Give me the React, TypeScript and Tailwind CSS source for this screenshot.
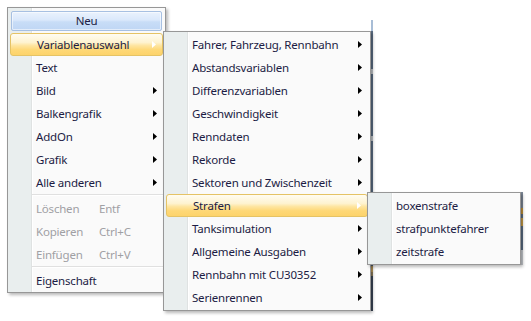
import React from "react";

const gutterBg =
  "bg-[linear-gradient(to_right,#e9eeee_0px,#e9eeee_23px,#dfe2e2_23px,#dfe2e2_24px,#ffffff_24px,#ffffff_25px,#fafafa_25px)]";

function Arrow({ white }: { white?: boolean }) {
  return (
    <svg width="4" height="7" viewBox="0 0 4 7" className="shrink-0">
      <polygon points="0,0 4,3.5 0,7" fill={white ? "#ffffff" : "#000000"} />
    </svg>
  );
}

type Item = {
  label: string;
  sub?: boolean;
  hot?: boolean;
  disabled?: boolean;
  shortcut?: string;
  sep?: boolean;
};

function Row({ item }: { item: Item }) {
  if (item.sep) {
    return (
      <div className="h-[3px] ml-[22px] flex flex-col">
        <div className="h-[1px] bg-[#e0e0e0]" />
        <div className="h-[1px] bg-white" />
      </div>
    );
  }
  const hot = item.hot;
  return (
    <div
      className={
        "h-[23px] flex items-center pl-[26px] pr-[6px] rounded-[3px] " +
        (hot
          ? "border border-[#e5c365] pl-[25px] pr-[5px] bg-[linear-gradient(to_bottom,#fffcf2_0%,#fef3d0_40%,#fee5a0_55%,#fed877_75%,#fdd36b_100%)]"
          : "")
      }
    >
      {item.shortcut !== undefined ? (
        <>
          <span className="w-[63px] text-[#a0a0a4]">{item.label}</span>
          <span className="text-[#a0a0a4]">{item.shortcut}</span>
        </>
      ) : (
        <span className={"flex-1 " + (item.disabled ? "text-[#a0a0a4]" : "")}>{item.label}</span>
      )}
      {item.sub ? <Arrow white={hot} /> : null}
    </div>
  );
}

export default function App() {
  const menu1: Item[] = [
    { label: "Variablenauswahl", sub: true, hot: true },
    { label: "Text" },
    { label: "Bild", sub: true },
    { label: "Balkengrafik", sub: true },
    { label: "AddOn", sub: true },
    { label: "Grafik", sub: true },
    { label: "Alle anderen", sub: true },
    { label: "", sep: true },
    { label: "Löschen", shortcut: "Entf", disabled: true },
    { label: "Kopieren", shortcut: "Ctrl+C", disabled: true },
    { label: "Einfügen", shortcut: "Ctrl+V", disabled: true },
    { label: "", sep: true },
    { label: "Eigenschaft" },
  ];
  const menu2: Item[] = [
    { label: "Fahrer, Fahrzeug, Rennbahn", sub: true },
    { label: "Abstandsvariablen", sub: true },
    { label: "Differenzvariablen", sub: true },
    { label: "Geschwindigkeit", sub: true },
    { label: "Renndaten", sub: true },
    { label: "Rekorde", sub: true },
    { label: "Sektoren und Zwischenzeit", sub: true },
    { label: "Strafen", sub: true, hot: true },
    { label: "Tanksimulation", sub: true },
    { label: "Allgemeine Ausgaben", sub: true },
    { label: "Rennbahn mit CU30352", sub: true },
    { label: "Serienrennen", sub: true },
  ];
  const menu3: Item[] = [
    { label: "boxenstrafe" },
    { label: "strafpunktefahrer" },
    { label: "zeitstrafe" },
  ];

  return (
    <div className="relative w-[531px] h-[321px] bg-white overflow-hidden font-['Noto_Sans',sans-serif] text-[11.5px] tracking-[-0.2px] leading-none text-[#1c1c44]">
      {/* background window bits peeking behind menu shadows */}
      <div className="absolute left-[371px] top-[20px] w-[2px] h-[291px] flex flex-col">
        <div className="h-[11px] bg-[#a8bdd6]" />
        <div className="h-[38px] bg-[#5a6c82]" />
        <div className="h-[5px] bg-[#bfc3c8]" />
        <div className="h-[62px] bg-[#5a6c82]" />
        <div className="h-[5px] bg-[#bfc3c8]" />
        <div className="h-[125px] bg-[#5a6c82]" />
        <div className="h-[6px] bg-[#b7975a]" />
        <div className="h-[4px] bg-[#8a7a5a]" />
        <div className="flex-1 bg-[#3a4656]" />
      </div>
      <div className="absolute left-[521px] top-[192px] w-[2px] h-[73px] flex flex-col">
        <div className="h-[16px] bg-[#7c8796]" />
        <div className="h-[6px] bg-[#c0913a]" />
        <div className="h-[4px] bg-[#5a6c82]" />
        <div className="h-[8px] bg-[#c49a45]" />
        <div className="h-[24px] bg-[#5a6c82]" />
        <div className="flex-1 bg-[#c8cbd0]" />
      </div>

      {/* Menu 1 */}
      <div
        className={
          "absolute left-[7px] top-[7px] w-[159px] h-[286px] border border-[#979797] shadow-[2px_2px_3px_rgba(0,0,0,0.28)] px-[2px] pt-[1px] flex flex-col " +
          gutterBg
        }
      >
        <div className="mt-[2px] mb-[2px] mx-[1px] h-[20px] flex items-center justify-center rounded-[2px] border border-[#a7c0e2] bg-[linear-gradient(to_bottom,#eaf2fd_0%,#dae8fb_45%,#c8ddf7_55%,#bfd6f4_100%)] shadow-[inset_0_0_0_1px_rgba(255,255,255,0.55)]">
          <span>Neu</span>
        </div>
        {menu1.map((it, i) => (
          <Row key={i} item={it} />
        ))}
      </div>

      {/* Menu 2 */}
      <div
        className={
          "absolute left-[163px] top-[31px] w-[208px] h-[280px] border border-[#979797] shadow-[2px_2px_3px_rgba(0,0,0,0.28)] px-[2px] py-[1px] flex flex-col " +
          gutterBg
        }
      >
        {menu2.map((it, i) => (
          <Row key={i} item={it} />
        ))}
      </div>

      {/* Menu 3 */}
      <div
        className={
          "absolute left-[367px] top-[192px] w-[154px] h-[73px] border border-[#979797] shadow-[2px_2px_3px_rgba(0,0,0,0.28)] px-[2px] py-[1px] flex flex-col " +
          gutterBg
        }
      >
        {menu3.map((it, i) => (
          <Row key={i} item={it} />
        ))}
      </div>
    </div>
  );
}
